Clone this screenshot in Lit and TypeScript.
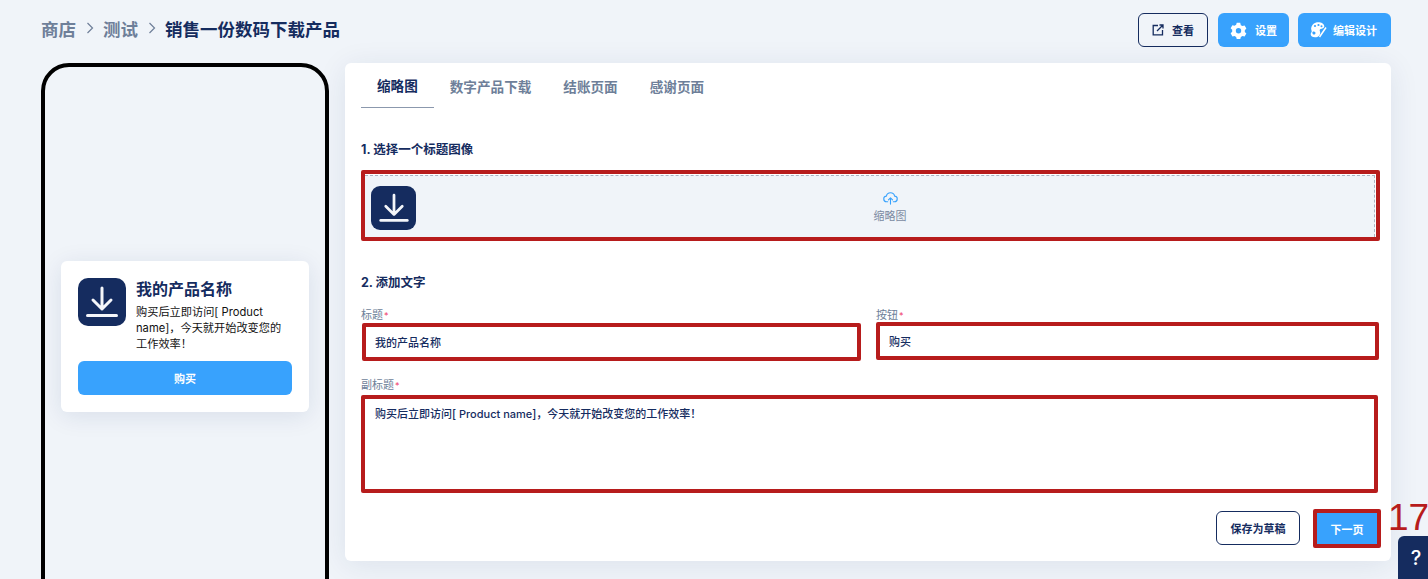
import { LitElement, html, css } from "lit";
import { customElement } from "lit/decorators.js";

const dl = (s: number) => html`<svg width=${s} height=${s} viewBox="0 0 48 48" fill="none" stroke="#f4f6fa" stroke-width="3" stroke-linecap="round" stroke-linejoin="round"><path d="M24 10v21M15 22l9 9 9-9"/><path d="M9.500 37.500h29"/></svg>`;

@customElement("app-root")
export class AppRoot extends LitElement {
  static styles = css`
    :host { display: block; width: 1428px; height: 579px; overflow: hidden; position: relative; background: #f0f4f9;
      font-family: Inter, "Noto Sans CJK SC", sans-serif; color: #152c5f; }
    * { box-sizing: border-box; }
    .top { display: flex; align-items: center; justify-content: space-between; height: 63px; padding: 0 37px 3px 41px; }
    .crumbs { display: flex; align-items: center; gap: 8px; font-size: 17.500px; font-weight: 700; color: #6e7f99; margin-top: -4px; }
    .crumbs b { color: #152c5f; font-weight: 700; }
    .crumbs svg { display: block; margin: 0 .5px; }
    .actions { display: flex; gap: 10px; }
    .btn { display: flex; align-items: center; justify-content: center; gap: 8px; height: 34px; border-radius: 6px; font-size: 11px; font-weight: 700; }
    .primary { background: #38a2fd; color: #fff; }
    .outline { border: 1px solid #152c5f; background: transparent; color: #152c5f; }
    .view { width: 70px; }
    .settings { width: 71px; margin-right: -1px; }
    .edit { width: 93px; gap: 6px; padding-right: 2px; }
    .main { display: flex; gap: 16px; padding-left: 41px; align-items: flex-start; }
    .phone { width: 288px; height: 547px; border: 4px solid #000; border-radius: 28px; display: flex; align-items: center; justify-content: center; flex: none; }
    .card { width: 248px; height: 151px; background: #fff; border-radius: 6px; padding: 17px; box-shadow: 0 4px 24px rgba(21,44,95,.1); }
    .card .row { display: flex; gap: 10px; }
    .logo { background: #152c5f; display: flex; align-items: center; justify-content: center; flex: none; }
    .card .logo { width: 48px; height: 48px; border-radius: 10px; }
    .card h3 { margin: 0; font-size: 16px; line-height: 22px; font-weight: 700; }
    .card p { margin: 4px 0 0; font-size: 11.200px; line-height: 16px; color: #111; }
    .buy { margin-top: 9px; height: 34px; background: #38a2fd; color: #fff; border-radius: 6px; display: flex; align-items: center; justify-content: center; font-size: 11px; font-weight: 700; }
    .panel { width: 1046px; height: 498px; background: #fff; border-radius: 6px; padding: 0 16px; box-shadow: 0 4px 30px rgba(21,44,95,.09); flex: none; }
    .tabs { display: flex; height: 45px; }
    .tab { padding: 0 16px; display: flex; align-items: center; font-size: 13.600px; font-weight: 700; color: #6e7f99; height: 45px; }
    .tab.on { color: #152c5f; border-bottom: 1px solid #8b98ad; }
    h4 { margin: 0; font-size: 12.500px; line-height: 16px; font-weight: 700; color: #152c5f; }
    .h1 { margin-top: 34px; }
    .red { border: 4px solid #b71c1c; border-radius: 2px; }
    .upload { margin: 12px -5px 0 0; height: 71px; padding: 1px 1px 0 0; }
    .drop { height: 100%; background: #f0f4f9; border-style: dashed; border-color: #a9b3c2; border-width: 1px 1px 0 0; display: flex; align-items: center; padding: 2px 0 0 6px; }
    .drop .logo { width: 45px; height: 44px; border-radius: 9px; }
    .hint { flex: 1; display: flex; flex-direction: column; align-items: center; gap: 4px; font-size: 11px; line-height: 14px; color: #7b8aa1; margin: -2px 10px 0 0; }
    .hint svg { display: block; }
    .h2 { margin-top: 34px; }
    .grid { display: grid; grid-template-columns: 500px 503px; column-gap: 15px; margin-top: 17px; }
    label { display: block; font-size: 11px; line-height: 14px; color: #6e7f99; }
    label i { color: #ef3d6b; font-style: normal; font-size: 9px; margin-left: 1px; }
    .input { height: 38px; background: #fff; font-size: 11px; font-weight: 500; color: #152c5f; display: flex; align-items: center; padding-left: 9px; }
    .input.a { margin-left: 1px; width: 499px; }
    .input.b { margin-top: -1px; }
    .sub { margin-top: 17px; }
    .area { margin-top: 2px; height: 98px; width: 1017px; border: 4px solid #b71c1c; border-radius: 2px; font-size: 11px; font-weight: 500; padding: 8px 10px; line-height: 14px; color: #152c5f; }
    .foot { display: flex; justify-content: flex-end; align-items: flex-start; gap: 13px; margin: 16px -6px 0 0; }
    .save { width: 84px; margin-top: 2px; }
    .next { width: 68px; height: 39px; border: 4px solid #b71c1c; border-radius: 2px; background: #38a2fd; color: #fff; display: flex; align-items: center; justify-content: center; font-size: 11px; font-weight: 700; }
    .num { position: absolute; left: 1388px; top: 497px; font-family: "Liberation Sans", sans-serif; font-size: 37px; line-height: 42px; color: #b71c1c; }
    .help { position: absolute; left: 1398px; top: 536px; width: 30px; height: 43px; padding-left: 6px; background: #152c5f; border-radius: 6px 0 0 0; color: #fff; font-size: 20px; font-weight: 500; display: flex; align-items: center; justify-content: center; }
  `;

  render() {
    const chev = html`<svg width="10" height="12" viewBox="0 0 10 12" fill="none" stroke="#6e7f99" stroke-width="1.200"><path d="M2.500 1 7.500 6l-5 5"/></svg>`;
    return html`
      <div class="top">
        <div class="crumbs"><span>商店</span>${chev}<span>测试</span>${chev}<b>销售一份数码下载产品</b></div>
        <div class="actions">
          <div class="btn outline view">
            <svg width="12" height="12" viewBox="0 0 12 12" fill="none" stroke="#152c5f" stroke-width="1.300"><path d="M6 1.500H1.200v9.300h9.300V6M5 7l5.500-5.500M7.500 1h3.500v3.500"/></svg>
            <span>查看</span>
          </div>
          <div class="btn primary settings">
            <svg width="17" height="17" viewBox="0 0 24 24" fill="#fff"><path fill-rule="evenodd" d="M14.500 1.500l.8 3 2.300 1.300 3-.8 2.500 4.300-2.200 2.200v2.600l2.200 2.200-2.500 4.300-3-.8-2.300 1.300-.8 3h-5l-.8-3-2.300-1.300-3 .8L.9 15.800l2.200-2.200V11L.9 8.800l2.500-4.300 3 .8 2.300-1.300.8-3h5zM12 8.500a3.800 3.800 0 1 0 0 7.600 3.800 3.800 0 0 0 0-7.600z"/></svg>
            <span>设置</span>
          </div>
          <div class="btn primary edit">
            <svg width="17" height="16" viewBox="0 0 17 16"><path fill="#fff" d="M5.500.7C9.500-.5 14 1 14.300 4.300c.2 2-2.300 2.300-3.700 2.700-1.200.4-1 1.500-.6 2.500.8 2.300-1 5.800-5 5.800C1.600 15.300-.5 13 1.400 10.300c.9-1.300-.6-2.500-.2-4.400C1.600 3.500 3.200 1.500 5.500.7z"/><g fill="#38a2fd"><circle cx="5" cy="4" r="1.100"/><circle cx="8.500" cy="3" r="1.100"/><circle cx="11.500" cy="4.300" r="1"/><path d="M3.200 9.500c1.300-.4 2.500.6 2.300 1.800-.2 1.200-1.600 1.700-2.500 1-.9-.7-.9-2.400.2-2.800z"/></g><path d="M9.500 15 16 5.500" stroke="#fff" stroke-width="1.500" fill="none"/></svg>
            <span>编辑设计</span>
          </div>
        </div>
      </div>
      <div class="main">
        <div class="phone">
          <div class="card">
            <div class="row">
              <div class="logo">${dl(48)}</div>
              <div>
                <h3>我的产品名称</h3>
                <p>购买后立即访问[ Product name]，今天就开始改变您的工作效率！</p>
              </div>
            </div>
            <div class="buy">购买</div>
          </div>
        </div>
        <div class="panel">
          <div class="tabs">
            <div class="tab on">缩略图</div>
            <div class="tab">数字产品下载</div>
            <div class="tab">结账页面</div>
            <div class="tab">感谢页面</div>
          </div>
          <h4 class="h1">1. 选择一个标题图像</h4>
          <div class="upload red">
            <div class="drop">
              <div class="logo">${dl(44)}</div>
              <div class="hint">
                <svg width="15" height="14" viewBox="0 0 16 15" fill="none" stroke="#38a2fd" stroke-width="1.200" stroke-linecap="round" stroke-linejoin="round"><path d="M5 11.500H4a3 3 0 0 1-.4-6 4.500 4.500 0 0 1 8.800 0 3 3 0 0 1-.4 6h-1M8 14V7.500M5.800 9.500 8 7.300l2.200 2.200"/></svg>
                <span>缩略图</span>
              </div>
            </div>
          </div>
          <h4 class="h2">2. 添加文字</h4>
          <div class="grid">
            <div><label>标题<i>*</i></label><div class="input a red">我的产品名称</div></div>
            <div><label>按钮<i>*</i></label><div class="input b red">购买</div></div>
          </div>
          <div class="sub">
            <label>副标题<i>*</i></label>
            <div class="area">购买后立即访问[ Product name]，今天就开始改变您的工作效率！</div>
          </div>
          <div class="foot">
            <div class="btn outline save">保存为草稿</div>
            <div class="next">下一页</div>
          </div>
        </div>
      </div>
      <div class="num">17</div>
      <div class="help">?</div>
    `;
  }
}
